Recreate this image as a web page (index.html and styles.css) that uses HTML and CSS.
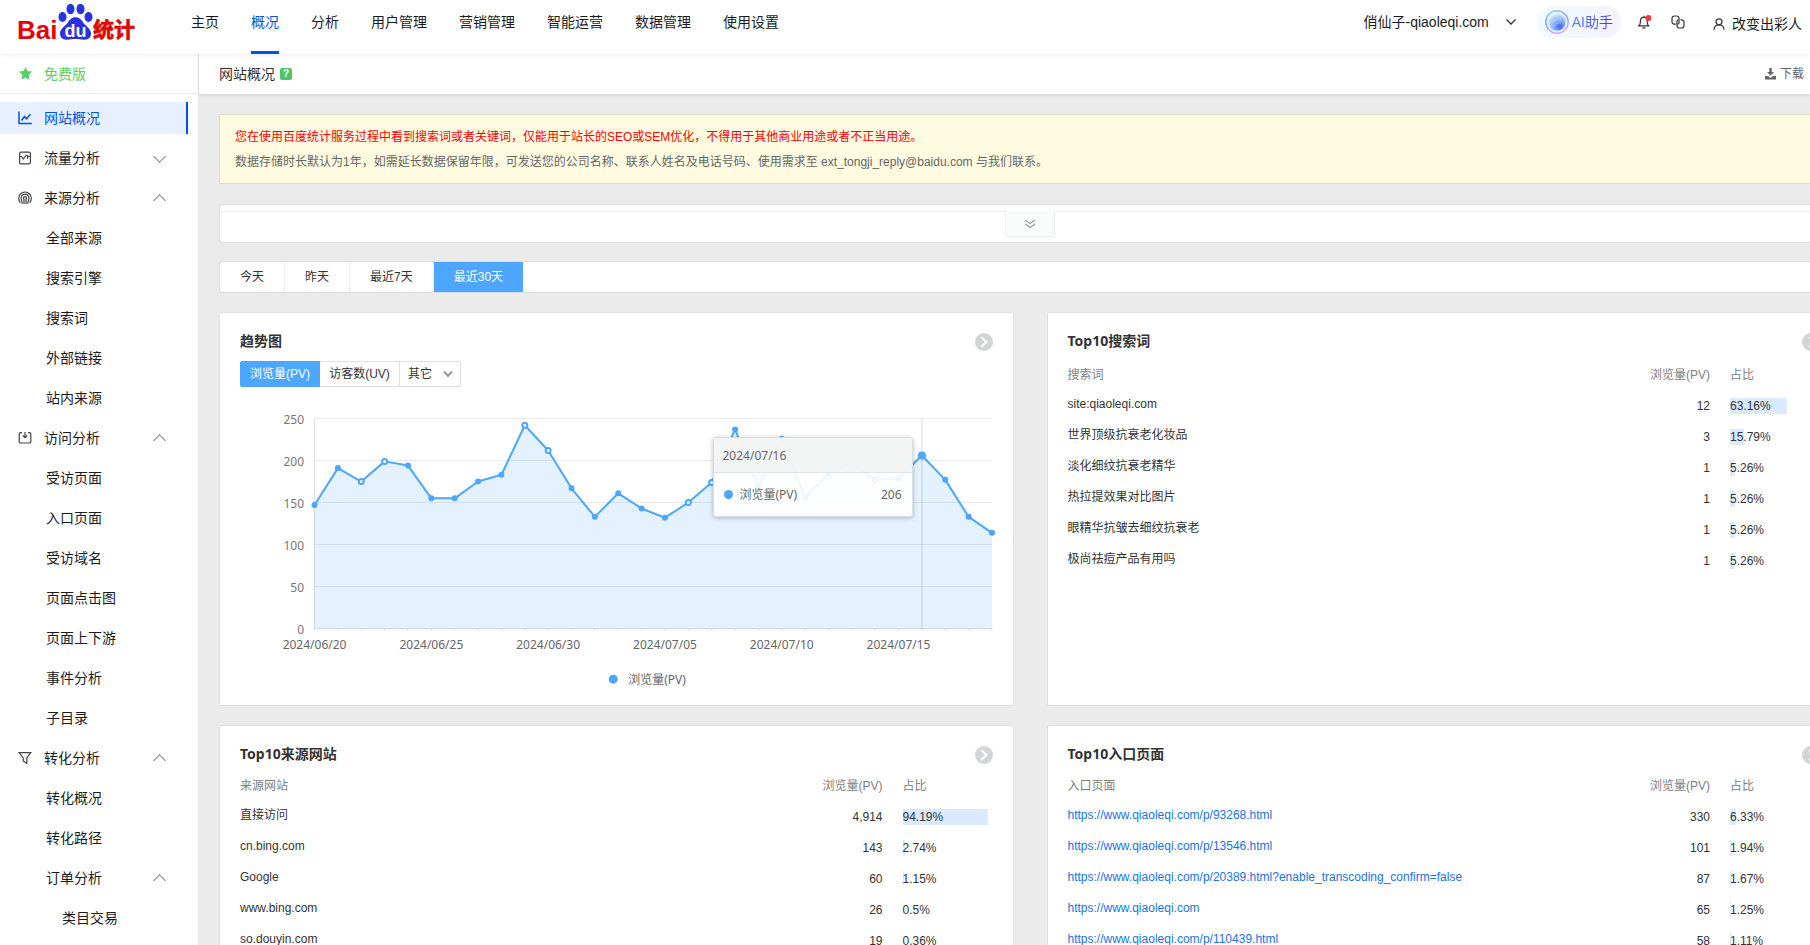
FILE: index.html
```html
<!DOCTYPE html>
<html lang="zh-CN">
<head>
<meta charset="utf-8">
<title>网站概况</title>
<link rel="stylesheet" href="styles.css">
</head>
<body>
<header class="topbar">
  <a class="logo" href="#" aria-label="百度统计">
    <svg width="118" height="44" viewBox="0 0 118 44">
      <g fill="#e10601" class="logo-text">
        <text x="0" y="39" font-size="26">Bai</text>
        <text x="76" y="37" font-size="21" class="logo-cjk" stroke="#e10601" stroke-width=".7">统计</text>
      </g>
      <g fill="#2932e1">
        <ellipse cx="45.500" cy="17" rx="4" ry="5"/>
        <ellipse cx="53.500" cy="9" rx="4" ry="5.300"/>
        <ellipse cx="63.500" cy="9" rx="4" ry="5.300"/>
        <ellipse cx="71.500" cy="17" rx="4" ry="5"/>
        <path d="M58.500 17.300c4 0 6 2.500 8 5.700C68.500 26 74 28.500 74 33.500c0 4-3 6.500-7 6.200-3-.4-5.500-.8-8.500-.8s-5.500.4-8.500.8c-4 .3-7-2.200-7-6.200 0-5 5.500-7.500 7.500-10.500 2-3.200 4-5.700 8-5.700z"/>
      </g>
      <text x="47.500" y="37" font-size="18" fill="#fff" class="logo-text">du</text>
    </svg>
  </a>
  <nav class="topnav">
    <a href="#">主页</a>
    <a href="#" class="current">概况</a>
    <a href="#">分析</a>
    <a href="#">用户管理</a>
    <a href="#">营销管理</a>
    <a href="#">智能运营</a>
    <a href="#">数据管理</a>
    <a href="#">使用设置</a>
  </nav>
  <div class="tools">
    <button class="site" type="button">俏仙子-qiaoleqi.com
      <svg width="12" height="12" viewBox="0 0 12 12"><path d="M1.500 3.500 6 8l4.500-4.500" fill="none" stroke="#333" stroke-width="1.300"/></svg>
    </button>
    <button class="assistant" type="button">
      <svg width="24" height="24" viewBox="0 0 24 24">
        <defs>
          <linearGradient id="ring" x1="0" y1="0" x2=".4" y2="1"><stop offset="0" stop-color="#8fd6fb"/><stop offset=".5" stop-color="#8b9cf5"/><stop offset="1" stop-color="#d7a8f8"/></linearGradient>
          <radialGradient id="orb" cx=".65" cy=".75" r=".75"><stop offset="0" stop-color="#3f63ee"/><stop offset=".45" stop-color="#7fb0f6"/><stop offset="1" stop-color="#dceefe"/></radialGradient>
        </defs>
        <circle cx="12" cy="12" r="11.200" fill="#eef4ff" stroke="url(#ring)" stroke-width="1.500"/>
        <circle cx="12" cy="12" r="8.800" fill="url(#orb)"/>
        <path d="M8 13c2-3 5-4 8-3M9 16c2-3 5-3.500 7-3" fill="none" stroke="#fff" stroke-opacity=".35"/>
      </svg>
      <span>AI助手</span>
    </button>
    <button class="icon-button bell" type="button" aria-label="通知">
      <svg width="14" height="14" viewBox="0 0 14 14"><g fill="none" stroke="#333" stroke-width="1.200"><path d="M7 .8v1.400M1 10.900h11.400M2.200 10.900c.9-1.200 1.200-2.400 1.200-4.600C3.400 3.900 4.800 2.200 6.800 2.200s3.400 1.700 3.400 4.100c0 2.200.3 3.400 1.200 4.600"/><path d="M5.300 12.900h3.200"/></g><circle cx="11.500" cy="3" r="3" fill="#f23a3a"/></svg>
    </button>
    <button class="icon-button links" type="button" aria-label="关联">
      <svg width="14" height="14" viewBox="0 0 14 14"><g fill="none" stroke="#333" stroke-width="1.200"><path d="M4.800 9.200H3.500A2.500 2.500 0 0 1 1 6.700V3.500A2.500 2.500 0 0 1 3.500 1h2A2.500 2.500 0 0 1 8 3.500v4.200A1.400 1.400 0 0 1 6.600 9.100"/><path d="M9.500 4.900h1A2.500 2.500 0 0 1 13 7.400v3.100a2.500 2.500 0 0 1-2.500 2.500h-2A2.500 2.500 0 0 1 6 10.500V6.300A1.400 1.400 0 0 1 7.400 4.900"/></g></svg>
    </button>
    <button class="user" type="button">
      <svg width="12" height="12" viewBox="0 0 12 12"><g fill="none" stroke="#333" stroke-width="1.200"><circle cx="6" cy="3.800" r="3"/><path d="M1 11.800c0-3 2-5 5-5s5 2 5 5"/></g></svg>
      改变出彩人
    </button>
  </div>
</header>
<div class="shell">
  <aside class="sidebar">
    <div class="edition">
      <svg width="13" height="13" viewBox="0 0 12 12"><path d="M6 0l1.800 3.600 4.200.6-3 3 .7 4.500L6 9.800l-3.700 1.900L3 7.200l-3-3 4.200-.6z" fill="#5bcf65"/></svg>
      免费版
    </div>
    <ul class="menu">
      <li><a class="group active" href="#"><svg width="14" height="14" viewBox="0 0 14 14"><path d="M1 .5v12h12.800M3.500 9.500l3-4 2 2.300L12.500 3.300" fill="none" stroke="#0052e6" stroke-width="1.500"/></svg>网站概况</a></li>
      <li><a class="group closed" href="#"><svg width="14" height="14" viewBox="0 0 14 14"><g fill="none" stroke="#444" stroke-width="1.200"><rect x="1.600" y="1.100" width="10.800" height="11.800" rx="1.500"/><path d="M1.600 5.500h2l1.700 2.500 2.700-3.500h1.500v3.500M9.500 5.500h3"/></g></svg>流量分析</a></li>
      <li><a class="group open" href="#"><svg width="14" height="14" viewBox="0 0 14 14"><g fill="none" stroke="#444" stroke-width="1.200"><path d="M2.400 11.600a6.300 6.300 0 1 1 9.200 0"/><path d="M4 12.800c.4-1.500 0-2.600-.5-3.800a4 4 0 1 1 7 0c-.5 1.200-.9 2.300-.5 3.800"/><path d="M6 13V8.200a1.500 1.500 0 1 1 2 0V13"/></g></svg>来源分析</a></li>
      <li><a class="sub" href="#">全部来源</a></li>
      <li><a class="sub" href="#">搜索引擎</a></li>
      <li><a class="sub" href="#">搜索词</a></li>
      <li><a class="sub" href="#">外部链接</a></li>
      <li><a class="sub" href="#">站内来源</a></li>
      <li><a class="group open" href="#"><svg width="14" height="14" viewBox="0 0 14 14"><path d="M4 1.600H2.500A1.300 1.300 0 0 0 1.200 2.900v7.800A1.300 1.300 0 0 0 2.500 12h9a1.300 1.300 0 0 0 1.300-1.300V2.900A1.300 1.300 0 0 0 11.500 1.600H10M7 1v5.500M4.800 4.500 7 6.700l2.200-2.200" fill="none" stroke="#444" stroke-width="1.200"/></svg>访问分析</a></li>
      <li><a class="sub" href="#">受访页面</a></li>
      <li><a class="sub" href="#">入口页面</a></li>
      <li><a class="sub" href="#">受访域名</a></li>
      <li><a class="sub" href="#">页面点击图</a></li>
      <li><a class="sub" href="#">页面上下游</a></li>
      <li><a class="sub" href="#">事件分析</a></li>
      <li><a class="sub" href="#">子目录</a></li>
      <li><a class="group open" href="#"><svg width="14" height="14" viewBox="0 0 14 14"><path d="M1.200 1.700h11.600L8.800 7v5.300L5.200 10V7z" fill="none" stroke="#444" stroke-width="1.200"/></svg>转化分析</a></li>
      <li><a class="sub" href="#">转化概况</a></li>
      <li><a class="sub" href="#">转化路径</a></li>
      <li><a class="sub open" href="#">订单分析</a></li>
      <li><a class="sub deep" href="#">类目交易</a></li>
    </ul>
  </aside>
  <main class="main">
    <div class="titlebar">
      <h1>网站概况</h1>
      <button class="help" type="button">?</button>
      <a class="download" href="#"><svg width="11" height="12" viewBox="0 0 11 12"><path d="M4.300 0h2.400v4H9L5.500 7.500 2 4h2.300zM0 8h3l2.500 2L8 8h3v3.500H0z" fill="#666"/></svg>下载</a>
    </div>
    <div class="content">
      <div class="notice">
        <p class="warn">您在使用百度统计服务过程中看到搜索词或者关键词，仅能用于站长的SEO或SEM优化，不得用于其他商业用途或者不正当用途。</p>
        <p>数据存储时长默认为1年，如需延长数据保留年限，可发送您的公司名称、联系人姓名及电话号码、使用需求至 ext_tongji_reply@baidu.com 与我们联系。</p>
      </div>
      <div class="summary">
        <button class="expand" type="button" aria-label="展开"><svg width="12" height="10" viewBox="0 0 12 10"><path d="M1 1l5 3.500L11 1M1 5l5 3.500L11 5" fill="none" stroke="#999" stroke-width="1.100"/></svg></button>
      </div>
      <div class="range">
        <button type="button">今天</button>
        <button type="button">昨天</button>
        <button type="button">最近7天</button>
        <button type="button" class="selected">最近30天</button>
      </div>
      <div class="cards">
        <section class="card">
          <div class="card-head"><h2>趋势图</h2><a class="more" href="#" aria-label="更多"></a></div>
          <div class="metrics">
            <button type="button" class="selected">浏览量(PV)</button>
            <button type="button">访客数(UV)</button>
            <select aria-label="其它指标"><option>其它</option></select>
          </div>
          <div class="chart">
            <svg id="trend" viewBox="0 0 752 290" role="img" aria-label="浏览量趋势"></svg>
            <div class="tooltip">
              <div class="tooltip-date">2024/07/16</div>
              <div class="tooltip-row"><i class="dot"></i><span>浏览量(PV)</span><b>206</b></div>
            </div>
          </div>
        </section>
        <section class="card roomy">
          <div class="card-head"><h2>Top10搜索词</h2><a class="more" href="#" aria-label="更多"></a></div>
          <table>
            <thead><tr><th>搜索词</th><th class="num">浏览量(PV)</th><th class="share">占比</th></tr></thead>
            <tbody>
              <tr><td>site:qiaoleqi.com</td><td class="num">12</td><td class="share"><div class="bar" style="--share:63.16%">63.16%</div></td></tr>
              <tr><td>世界顶级抗衰老化妆品</td><td class="num">3</td><td class="share"><div class="bar" style="--share:15.79%">15.79%</div></td></tr>
              <tr><td>淡化细纹抗衰老精华</td><td class="num">1</td><td class="share"><div class="bar" style="--share:5.26%">5.26%</div></td></tr>
              <tr><td>热拉提效果对比图片</td><td class="num">1</td><td class="share"><div class="bar" style="--share:5.26%">5.26%</div></td></tr>
              <tr><td>眼精华抗皱去细纹抗衰老</td><td class="num">1</td><td class="share"><div class="bar" style="--share:5.26%">5.26%</div></td></tr>
              <tr><td>极尚祛痘产品有用吗</td><td class="num">1</td><td class="share"><div class="bar" style="--share:5.26%">5.26%</div></td></tr>
            </tbody>
          </table>
        </section>
        <section class="card">
          <div class="card-head"><h2>Top10来源网站</h2><a class="more" href="#" aria-label="更多"></a></div>
          <table>
            <thead><tr><th>来源网站</th><th class="num">浏览量(PV)</th><th class="share">占比</th></tr></thead>
            <tbody>
              <tr><td>直接访问</td><td class="num">4,914</td><td class="share"><div class="bar" style="--share:94.19%">94.19%</div></td></tr>
              <tr><td>cn.bing.com</td><td class="num">143</td><td class="share"><div class="bar" style="--share:2.74%">2.74%</div></td></tr>
              <tr><td>Google</td><td class="num">60</td><td class="share"><div class="bar" style="--share:1.15%">1.15%</div></td></tr>
              <tr><td>www.bing.com</td><td class="num">26</td><td class="share"><div class="bar" style="--share:0.5%">0.5%</div></td></tr>
              <tr><td>so.douyin.com</td><td class="num">19</td><td class="share"><div class="bar" style="--share:0.36%">0.36%</div></td></tr>
            </tbody>
          </table>
        </section>
        <section class="card">
          <div class="card-head"><h2>Top10入口页面</h2><a class="more" href="#" aria-label="更多"></a></div>
          <table>
            <thead><tr><th>入口页面</th><th class="num">浏览量(PV)</th><th class="share">占比</th></tr></thead>
            <tbody>
              <tr><td><a href="#">https://www.qiaoleqi.com/p/93268.html</a></td><td class="num">330</td><td class="share"><div class="bar" style="--share:6.33%">6.33%</div></td></tr>
              <tr><td><a href="#">https://www.qiaoleqi.com/p/13546.html</a></td><td class="num">101</td><td class="share"><div class="bar" style="--share:1.94%">1.94%</div></td></tr>
              <tr><td><a href="#">https://www.qiaoleqi.com/p/20389.html?enable_transcoding_confirm=false</a></td><td class="num">87</td><td class="share"><div class="bar" style="--share:1.67%">1.67%</div></td></tr>
              <tr><td><a href="#">https://www.qiaoleqi.com</a></td><td class="num">65</td><td class="share"><div class="bar" style="--share:1.25%">1.25%</div></td></tr>
              <tr><td><a href="#">https://www.qiaoleqi.com/p/110439.html</a></td><td class="num">58</td><td class="share"><div class="bar" style="--share:1.11%">1.11%</div></td></tr>
            </tbody>
          </table>
        </section>
      </div>
    </div>
  </main>
</div>
<script src="chart.js"></script>
</body>
</html>
```
FILE: styles.css
```css
* { box-sizing: border-box; }

body {
  margin: 0;
  height: 100vh;
  overflow: hidden;
  display: flex;
  flex-direction: column;
  background: #ebebeb;
  color: #333;
  font: 12px/24px "Liberation Sans", "Noto Sans CJK SC", sans-serif;
}

a { color: inherit; text-decoration: none; }
h1, h2, p, ul { margin: 0; padding: 0; }
ul { list-style: none; }
svg { flex: none; }

button, select {
  margin: 0;
  padding: 0;
  border: 0;
  background: none;
  color: inherit;
  font: inherit;
}

/* top bar */
.topbar {
  flex: none;
  height: 54px;
  display: flex;
  align-items: flex-start;
  padding: 0 8px 0 17px;
  background: #fff;
  box-shadow: 0 1px 4px rgba(0, 0, 0, .08);
  position: relative;
  z-index: 2;
  font-size: 14px;
  color: #191b1e;
}
.logo { display: flex; width: 174px; }
.logo-text { font-family: "Liberation Sans", sans-serif; font-weight: 700; }
.logo-cjk { font-family: "Noto Sans CJK SC", sans-serif; }
.topnav { display: flex; gap: 32px; }
.topnav a { height: 54px; line-height: 44px; }
.topnav .current { color: #0052e6; border-bottom: 3px solid #0052e6; }
.tools { display: flex; align-items: center; margin-left: auto; height: 44px; }
.site { display: flex; align-items: center; gap: 16px; margin-right: 20px; }
.assistant {
  display: flex;
  align-items: center;
  gap: 3px;
  height: 32px;
  padding: 0 8px;
  border-radius: 16px;
  background: linear-gradient(90deg, #f0fbff, #f5f2ff);
}
.assistant span {
  background: linear-gradient(90deg, #5b86f8, #4a36e4);
  background-clip: text;
  color: transparent;
}
.icon-button { display: flex; }
.bell { margin-left: 16px; }
.links { margin-left: 20px; }
.user { display: flex; align-items: center; gap: 7px; margin-left: 28px; padding-top: 3px; }

/* side menu */
.shell { flex: 1; display: flex; min-height: 0; }
.sidebar {
  flex: none;
  width: 199px;
  overflow: hidden;
  background: #fff;
  border-right: 1px solid #e8e8e8;
  font-size: 14px;
  color: #191b1e;
}
.edition {
  display: flex;
  align-items: center;
  gap: 12px;
  height: 40px;
  padding-left: 19px;
  border-bottom: 1px solid #ebebeb;
  color: #5bcf65;
}
.menu { display: flex; flex-direction: column; gap: 8px; padding-top: 8px; }
.menu a {
  display: flex;
  align-items: center;
  width: 188px;
  height: 32px;
}
.menu .group { gap: 12px; padding-left: 18px; }
.menu .sub { padding-left: 46px; }
.menu .deep { padding-left: 62px; }
.menu .active {
  background: #e8f0ff;
  border-right: 2px solid #0052e6;
  color: #0052e6;
}
.open::after, .closed::after {
  content: "";
  width: 8px;
  height: 8px;
  margin-left: auto;
  margin-right: 24px;
  border: solid #788294;
  border-width: 1px 0 0 1px;
  transform: translateY(2px) rotate(45deg);
}
.closed::after { transform: translateY(-2px) rotate(225deg); }

/* page title */
.main { flex: 1; min-width: 0; }
.titlebar {
  display: flex;
  align-items: center;
  height: 40px;
  padding: 0 6px 0 20px;
  background: #fff;
  box-shadow: 0 1px 3px rgba(0, 0, 0, .12);
}
.titlebar h1 { font-size: 14px; font-weight: 400; }
.help {
  width: 12px;
  height: 12px;
  margin-left: 5px;
  border-radius: 2px;
  background: #4cc46c;
  color: #fff;
  font-size: 10px;
  font-weight: 700;
  line-height: 12px;
}
.download { display: flex; align-items: center; gap: 4px; margin-left: auto; color: #666; }

/* the report area runs past the window's right edge */
.content { padding: 20px 0 0 20px; margin-right: -31px; }
.notice {
  padding: 10px 15px 8px;
  border: 1px solid #e0dcc0;
  background: #fffbe0;
  color: #666;
  line-height: 25px;
}
.notice .warn { color: #f00; }
.summary {
  display: flex;
  justify-content: center;
  height: 39px;
  margin-top: 20px;
  padding-top: 6px;
  border: 1px solid #dcdcdc;
  background: linear-gradient(#eee, #eee) 0 6px / 100% 1px no-repeat #fff;
}
.expand {
  display: flex;
  align-items: center;
  justify-content: center;
  width: 50px;
  height: 26px;
  border: 1px solid #eee;
  border-top: 0;
  border-radius: 0 0 3px 3px;
  background: #fafcfc;
}
.range {
  display: flex;
  height: 32px;
  margin-top: 18px;
  border: 1px solid #dcdcdc;
  background: #fff;
}
.range button { padding: 0 20px; border-right: 1px solid #eee; line-height: 30px; }
.range .selected { border: 0; background: #4da6ff; color: #fff; }

/* cards */
.cards {
  display: grid;
  grid-template-columns: 1fr 1fr;
  gap: 19px 33px;
  margin-top: 19px;
}
.card {
  min-width: 0;
  padding: 16px 20px 14px;
  border: 1px solid #e0e0e0;
  border-radius: 2px;
  background: #fff;
}
.card-head { display: flex; justify-content: space-between; align-items: flex-start; }
.card-head h2 { font: 700 14px/24px "Noto Sans", "Noto Sans CJK SC", sans-serif; }
.more {
  display: flex;
  align-items: center;
  justify-content: center;
  width: 18px;
  height: 18px;
  margin-top: 4px;
  border-radius: 50%;
  background: #d2d4d6;
}
.more::after {
  content: "";
  width: 6px;
  height: 6px;
  margin-right: 3px;
  border: solid #fff;
  border-width: 2px 2px 0 0;
  transform: rotate(45deg);
}
.metrics { display: flex; height: 26px; margin-top: 8px; }
.metrics button, .metrics select { border: 1px solid #e0e0e0; background: #fff; }
.metrics button { width: 80px; border-radius: 2px 0 0 2px; }
.metrics button + button { border-left: 0; border-radius: 0; }
.metrics .selected { border-color: #4da6ff; background: #4da6ff; color: #fff; }
.metrics select {
  width: 61px;
  padding-left: 8px;
  border-left: 0;
  border-radius: 0 2px 2px 0;
  appearance: none;
  background: url("data:image/svg+xml,%3Csvg xmlns='http://www.w3.org/2000/svg' width='10' height='8'%3E%3Cpath d='M1 1.500l4 4.500 4-4.500' fill='none' stroke='%23999' stroke-width='2'/%3E%3C/svg%3E") right 7px center no-repeat #fff;
}

/* trend chart */
.chart {
  position: relative;
  margin-top: 14px;
  font-family: "Noto Sans", "Noto Sans CJK SC", sans-serif;
}
.chart svg { display: block; width: 100%; overflow: visible; }
.grid-line { stroke: #eaeaea; }
.axis-line { stroke: #d8dbe0; }
.area { fill: #4da6ff; fill-opacity: .15; }
.line { fill: none; stroke: #4da6ff; stroke-width: 2; stroke-linejoin: round; }
.point { fill: #4da6ff; stroke: #4da6ff; }
.hollow { fill: #fff; stroke-width: 2; }
.pointer { stroke: #000; stroke-opacity: .15; }
.label { fill: #666; font-size: 12px; }
.value-label { fill: #777; text-anchor: end; }
.date-label { text-anchor: middle; }
.tooltip {
  position: absolute;
  right: 80px;
  top: 36px;
  width: 200px;
  border: 1px solid #dcdcdc;
  border-radius: 3px;
  background: rgba(255, 255, 255, .9);
  box-shadow: 0 1px 5px rgba(0, 0, 0, .25);
  color: #666;
}
.tooltip-date {
  height: 35px;
  padding: 0 9px;
  border-bottom: 1px solid #dfe4e4;
  background: rgba(240, 242, 241, .8);
  line-height: 36px;
}
.tooltip-row { display: flex; align-items: center; height: 43px; padding: 0 10px; }
.tooltip-row b { margin-left: auto; font-weight: 400; }
.dot { width: 9px; height: 9px; margin-right: 7px; border-radius: 50%; background: #4da6ff; }

/* ranking tables */
table { width: 100%; margin-top: 5px; border-collapse: collapse; table-layout: fixed; }
.roomy table { margin-top: 7px; }
th, td { padding: 0; text-align: left; white-space: nowrap; }
th { height: 30px; color: #808080; font-weight: 400; }
td { height: 31px; padding-bottom: 3px; }
td.num, td.share { padding-bottom: 0; }
.num { width: 100px; padding-right: 20px; text-align: right; }
th.num { padding-right: 20px; }
.share { width: 90px; }
td a { color: #1a73e0; }
.bar {
  height: 16px;
  background: linear-gradient(#dbe9ff, #dbe9ff) 0 0 / var(--share) 100% no-repeat;
  line-height: 17px;
}
```
FILE: chart.js
```js
const values = [147, 191, 175, 199, 194, 155, 155, 175, 183, 242, 212, 167, 133, 161, 143,
  132, 150, 174, 237, 169, 226, 156, 184, 197, 177, 179, 206, 177, 133, 114];
const hollowDays = new Set([2, 3, 9, 10, 16, 17, 23, 24]);
const dates = ["2024/06/20", "2024/06/25", "2024/06/30", "2024/07/05", "2024/07/10", "2024/07/15"];
const activeDay = 26;

const left = 74.5, right = 751.5, base = 227.5, unit = 0.84;
const x = i => left + (right - left) * i / (values.length - 1);
const y = v => base - v * unit;
const crisp = n => Math.floor(n) + 0.5;

let out = "";
for (let v = 0; v <= 250; v += 50) {
  out += `<line class="${v ? "grid-line" : "axis-line"}" x1="${left}" x2="${right}" y1="${y(v)}" y2="${y(v)}"/>`;
  out += `<text class="label value-label" x="64" y="${y(v) + 5}">${v}</text>`;
}
out += `<line class="axis-line" x1="${left}" x2="${left}" y1="${y(250)}" y2="${base}"/>`;
values.forEach((v, i) => {
  out += `<line class="axis-line" x1="${crisp(x(i))}" x2="${crisp(x(i))}" y1="${base}" y2="${base + 2}"/>`;
});
dates.forEach((d, i) => {
  out += `<text class="label date-label" x="${x(i * 5)}" y="248">${d}</text>`;
});
const points = values.map((v, i) => `${x(i)},${y(v)}`).join(" ");
out += `<polygon class="area" points="${left},${base} ${points} ${right},${base}"/>`;
out += `<line class="pointer" x1="${crisp(x(activeDay))}" x2="${crisp(x(activeDay))}" y1="${y(250)}" y2="${base}"/>`;
out += `<polyline class="line" points="${points}"/>`;
values.forEach((v, i) => {
  const r = i === activeDay ? 3.5 : 2.5;
  out += `<circle class="point${hollowDays.has(i) ? " hollow" : ""}" cx="${x(i)}" cy="${y(v)}" r="${r}"/>`;
});
out += `<circle class="point" cx="373" cy="278" r="4"/>`;
out += `<text class="label" x="388" y="283">浏览量(PV)</text>`;
document.getElementById("trend").innerHTML = out;
```
